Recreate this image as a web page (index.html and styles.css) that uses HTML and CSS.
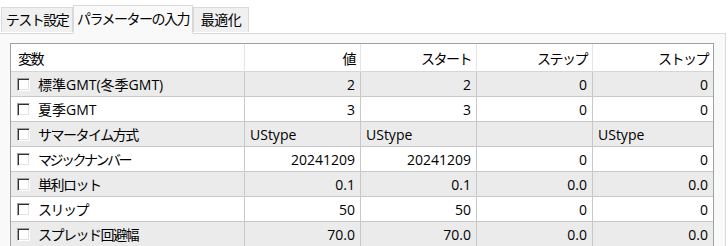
FILE: index.html
```html
<!DOCTYPE html>
<html lang="ja">
<head>
<meta charset="utf-8">
<title>パラメーターの入力</title>
<link rel="stylesheet" href="styles.css">
</head>
<body>
<div class="tabs">
  <div class="tab t1">テスト設定</div>
  <div class="tab active">パラメーターの入力</div>
  <div class="tab t3">最適化</div>
</div>
<div class="panel">
  <div class="grid">
    <div class="hd left">変数</div>
    <div class="hd">値</div>
    <div class="hd">スタート</div>
    <div class="hd">ステップ</div>
    <div class="hd last">ストップ</div>

    <div class="c lbl g"><span class="cb"></span><span>標準GMT(冬季GMT)</span></div>
    <div class="c g">2</div><div class="c g">2</div><div class="c g">0</div><div class="c g last">0</div>

    <div class="c lbl"><span class="cb"></span><span>夏季GMT</span></div>
    <div class="c">3</div><div class="c">3</div><div class="c">0</div><div class="c last">0</div>

    <div class="c lbl g"><span class="cb"></span><span class="kana">サマータイム方式</span></div>
    <div class="c g left">UStype</div><div class="c g left">UStype</div><div class="c g"></div><div class="c g left last">UStype</div>

    <div class="c lbl"><span class="cb"></span><span class="kana tight">マジックナンバー</span></div>
    <div class="c">20241209</div><div class="c">20241209</div><div class="c">0</div><div class="c last">0</div>

    <div class="c lbl g"><span class="cb"></span><span class="kana">単利ロット</span></div>
    <div class="c g">0.1</div><div class="c g">0.1</div><div class="c g">0.0</div><div class="c g last">0.0</div>

    <div class="c lbl"><span class="cb"></span><span class="kana">スリップ</span></div>
    <div class="c">50</div><div class="c">50</div><div class="c">0</div><div class="c last">0</div>

    <div class="c lbl g"><span class="cb"></span><span class="kana">スプレッド回避幅</span></div>
    <div class="c g">70.0</div><div class="c g">70.0</div><div class="c g">0.0</div><div class="c g last">0.0</div>
  </div>
</div>
</body>
</html>
```

FILE: styles.css
```css
html, body {
  margin: 0;
  padding: 0;
  background: #ffffff;
}
body {
  width: 728px;
  height: 246px;
  overflow: hidden;
  font-family: "Open Sans", "Noto Sans CJK JP", sans-serif;
  font-size: 14px;
  color: #000;
}
.tabs {
  display: flex;
  align-items: flex-end;
  height: 33px;
  padding-left: 1px;
  box-sizing: border-box;
  position: relative;
  z-index: 1;
}
.tab {
  height: 25px;
  box-sizing: border-box;
  border: 1px solid #d9d9d9;
  border-bottom: none;
  background: #f0f0f0;
  line-height: 23px;
  white-space: nowrap;
  margin-bottom: 1px;
  letter-spacing: -1.5px;
  text-align: center;
}
.t1 {
  width: 72px;
}
.t3 {
  width: 56px;
  letter-spacing: -0.5px;
}
.tab.active {
  width: 120px;
  height: 29px;
  line-height: 25px;
  background: #f9f9f9;
  margin-bottom: -1px;
  border-bottom: 1px solid #f9f9f9;
}
.panel {
  width: 726px;
  height: 213px;
  box-sizing: border-box;
  background: #f9f9f9;
  border-top: 1px solid #d9d9d9;
  border-right: 1px solid #dadada;
  padding: 9px 0 0 10px;
}
.grid {
  display: grid;
  grid-template-columns: 234px 116px 116px 116px 120px;
  grid-auto-rows: 25px;
  grid-template-rows: 28px;
  width: 704px;
  box-sizing: border-box;
  border-top: 1px solid #a0a0a0;
  border-left: 1px solid #a0a0a0;
  border-right: 1px solid #a0a0a0;
  background: #ffffff;
}
.hd {
  box-sizing: border-box;
  background: #ffffff;
  border-right: 1px solid #e5e5e5;
  border-bottom: 1px solid #d5d5d5;
  display: flex;
  align-items: center;
  justify-content: flex-end;
  padding: 0 5px 0 7px;
  white-space: nowrap;
  letter-spacing: -1.5px;
}
.c {
  box-sizing: border-box;
  background: #ffffff;
  border-right: 1px solid #c8c8c8;
  border-bottom: 1px solid #c8c8c8;
  display: flex;
  align-items: center;
  justify-content: flex-end;
  padding: 0 5px 0 5px;
  white-space: nowrap;
}
.c.g {
  background: #ebebeb;
}
.hd.last, .c.last {
  border-right: none;
}
.left {
  justify-content: flex-start;
}
.lbl {
  justify-content: flex-start;
  padding-left: 6px;
  gap: 8px;
}
.kana {
  letter-spacing: -1.5px;
}
.kana.tight {
  letter-spacing: -2.5px;
}
.cb {
  display: inline-block;
  width: 13px;
  height: 13px;
  box-sizing: border-box;
  background: #ffffff;
  border: 1px solid;
  border-color: #a0a0a0 #ffffff #ffffff #a0a0a0;
  box-shadow: inset 1px 1px 0 #303030, inset -1px -1px 0 #e3e3e3;
  flex: none;
}
```
